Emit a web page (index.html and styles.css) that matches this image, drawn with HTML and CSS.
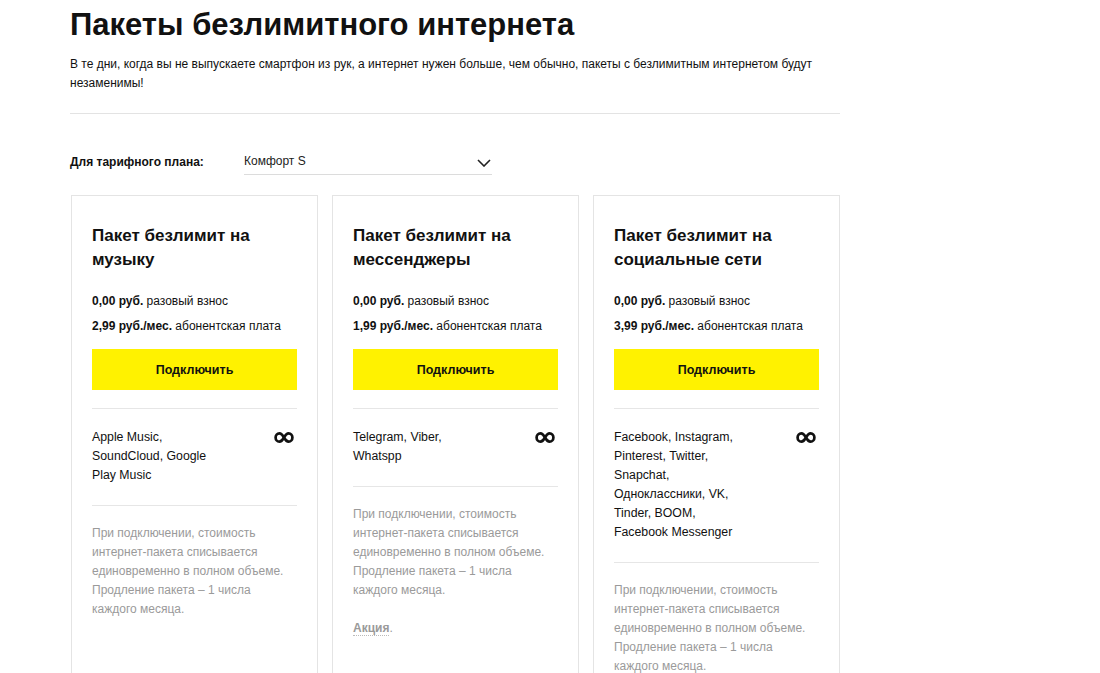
FILE: index.html
```html
<!DOCTYPE html>
<html lang="ru">
<head>
<meta charset="utf-8">
<title>Пакеты безлимитного интернета</title>
<link rel="stylesheet" href="styles.css">
</head>
<body>
<div class="page">
  <h1 class="title">Пакеты безлимитного интернета</h1>
  <p class="lead">В те дни, когда вы не выпускаете смартфон из рук, а интернет нужен больше, чем обычно, пакеты с безлимитным интернетом будут незаменимы!</p>
  <hr class="rule">
  <div class="filter">
    <span class="filter-label">Для тарифного плана:</span>
    <div class="select">
      <span>Комфорт S</span>
      <svg class="chevron" width="14" height="8" viewBox="0 0 14 8"><polyline points="1,1 7,7 13,1" fill="none" stroke="#222" stroke-width="1.6"/></svg>
    </div>
  </div>
  <div class="cards">
    <div class="card">
      <h2 class="card-title">Пакет безлимит на музыку</h2>
      <p class="price"><b>0,00 руб.</b> разовый взнос</p>
      <p class="price"><b>2,99 руб./мес.</b> абонентская плата</p>
      <button class="btn">Подключить</button>
      <div class="services">
        <span class="services-text">Apple Music, SoundCloud, Google Play Music</span>
        <svg class="inf" width="20" height="13" viewBox="0 0 20 13"><path d="M10 6.5 C8.2 3.2 6.8 2.3 5.4 2.3 C3.2 2.3 1.6 4.2 1.6 6.5 C1.6 8.8 3.2 10.7 5.4 10.7 C6.8 10.7 8.2 9.8 10 6.5 C11.8 3.2 13.2 2.3 14.6 2.3 C16.8 2.3 18.4 4.2 18.4 6.5 C18.4 8.8 16.8 10.7 14.6 10.7 C13.2 10.7 11.8 9.8 10 6.5 Z" fill="none" stroke="#111" stroke-width="2.7"/></svg>
      </div>
      <p class="note">При подключении, стоимость интернет-пакета списывается единовременно в полном объеме. Продление пакета – 1 числа каждого месяца.</p>
    </div>
    <div class="card">
      <h2 class="card-title">Пакет безлимит на мессенджеры</h2>
      <p class="price"><b>0,00 руб.</b> разовый взнос</p>
      <p class="price"><b>1,99 руб./мес.</b> абонентская плата</p>
      <button class="btn">Подключить</button>
      <div class="services">
        <span class="services-text">Telegram, Viber, Whatspp</span>
        <svg class="inf" width="20" height="13" viewBox="0 0 20 13"><path d="M10 6.5 C8.2 3.2 6.8 2.3 5.4 2.3 C3.2 2.3 1.6 4.2 1.6 6.5 C1.6 8.8 3.2 10.7 5.4 10.7 C6.8 10.7 8.2 9.8 10 6.5 C11.8 3.2 13.2 2.3 14.6 2.3 C16.8 2.3 18.4 4.2 18.4 6.5 C18.4 8.8 16.8 10.7 14.6 10.7 C13.2 10.7 11.8 9.8 10 6.5 Z" fill="none" stroke="#111" stroke-width="2.7"/></svg>
      </div>
      <p class="note">При подключении, стоимость интернет-пакета списывается единовременно в полном объеме. Продление пакета – 1 числа каждого месяца.</p>
      <p class="note promo"><a class="promo-link">Акция</a>.</p>
    </div>
    <div class="card">
      <h2 class="card-title">Пакет безлимит на социальные сети</h2>
      <p class="price"><b>0,00 руб.</b> разовый взнос</p>
      <p class="price"><b>3,99 руб./мес.</b> абонентская плата</p>
      <button class="btn">Подключить</button>
      <div class="services">
        <span class="services-text">Facebook, Instagram, Pinterest, Twitter, Snapchat, Одноклассники, VK, Tinder, BOOM, Facebook Messenger</span>
        <svg class="inf" width="20" height="13" viewBox="0 0 20 13"><path d="M10 6.5 C8.2 3.2 6.8 2.3 5.4 2.3 C3.2 2.3 1.6 4.2 1.6 6.5 C1.6 8.8 3.2 10.7 5.4 10.7 C6.8 10.7 8.2 9.8 10 6.5 C11.8 3.2 13.2 2.3 14.6 2.3 C16.8 2.3 18.4 4.2 18.4 6.5 C18.4 8.8 16.8 10.7 14.6 10.7 C13.2 10.7 11.8 9.8 10 6.5 Z" fill="none" stroke="#111" stroke-width="2.7"/></svg>
      </div>
      <p class="note">При подключении, стоимость интернет-пакета списывается единовременно в полном объеме. Продление пакета – 1 числа каждого месяца.</p>
    </div>
  </div>
</div>
</body>
</html>
```

FILE: styles.css
```css
* { box-sizing: border-box; }
html, body {
  margin: 0;
  padding: 0;
  background: #fff;
  color: #111;
  font-family: "Liberation Sans", Arial, sans-serif;
}
.page {
  width: 770px;
  margin-left: 70px;
  padding-top: 5px;
}
.title {
  margin: 0;
  font-size: 31px;
  line-height: 40px;
  font-weight: 700;
  color: #111;
}
.lead {
  margin: 10px 0 0;
  font-size: 12px;
  line-height: 19px;
  color: #111;
}
.rule {
  margin: 20px 0 0;
  border: 0;
  border-top: 1px solid #e3e3e3;
  height: 0;
}
.filter {
  display: flex;
  align-items: center;
  margin-top: 35px;
}
.filter-label {
  width: 174px;
  font-size: 12px;
  font-weight: 700;
}
.select {
  width: 248px;
  height: 26px;
  display: flex;
  align-items: center;
  justify-content: space-between;
  border-bottom: 1px solid #dcdcdc;
  font-size: 12px;
  color: #222;
  padding-right: 1px;
}
.select span { margin-top: -2px; }
.chevron { margin-top: 2px; }
.cards {
  display: grid;
  grid-template-columns: repeat(3, 1fr);
  column-gap: 14px;
  margin-top: 20px;
  margin-left: 1px;
}
.card {
  border: 1px solid #e4e4e4;
  padding: 28px 20px 40px;
  min-height: 520px;
}
.card-title {
  margin: 0;
  font-size: 17px;
  line-height: 24px;
  font-weight: 700;
  color: #111;
}
.price {
  margin: 20px 0 0;
  font-size: 12px;
  line-height: 18px;
  color: #111;
}
.price + .price { margin-top: 7px; }
.btn {
  display: block;
  width: 100%;
  height: 41px;
  margin-top: 14px;
  border: 0;
  background: #fff200;
  font-family: "Liberation Sans", Arial, sans-serif;
  font-size: 12.5px;
  font-weight: 700;
  color: #111;
  cursor: pointer;
}
.services {
  display: flex;
  justify-content: space-between;
  align-items: flex-start;
  margin-top: 18px;
  border-top: 1px solid #e6e6e6;
  border-bottom: 1px solid #e6e6e6;
  padding: 19px 0 20px;
}
.services-text {
  width: 130px;
  font-size: 12.3px;
  line-height: 19px;
  color: #111;
}
.inf { margin-top: 3px; margin-right: 3px; }
.note {
  margin: 18px 0 0;
  font-size: 12px;
  line-height: 19px;
  color: #9a9a9a;
}
.note.promo { margin-top: 19px; }
.promo-link {
  font-weight: 700;
  color: #9a9a9a;
  border-bottom: 1px dotted #bbb;
}
```
